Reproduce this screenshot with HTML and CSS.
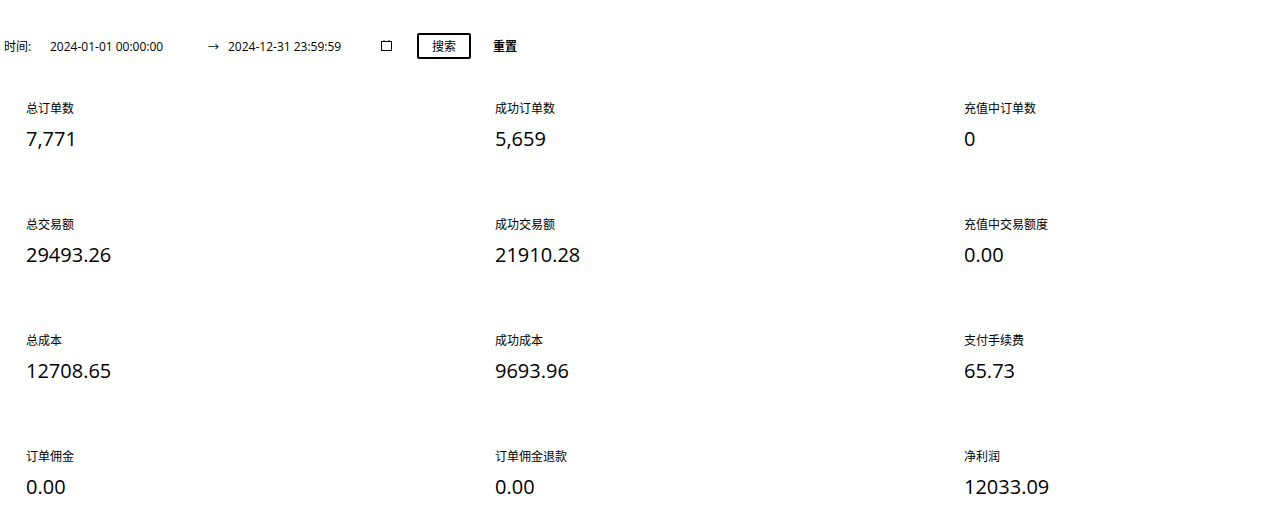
FILE: index.html
```html
<!DOCTYPE html>
<html lang="zh">
<head>
<meta charset="utf-8">
<title>统计</title>
<link rel="stylesheet" href="styles.css">
</head>
<body>
<div class="toolbar">
  <span class="label">时间:</span>
  <span class="date first">2024-01-01 00:00:00</span>
  <span class="arrow">→</span>
  <span class="date second">2024-12-31 23:59:59</span>
  <svg class="cal" width="11" height="11" viewBox="0 0 11 11"><rect x="0.5" y="1.5" width="10" height="9" fill="none" stroke="#000" stroke-width="1"/><line x1="3" y1="0" x2="3" y2="2" stroke="#000"/><line x1="8" y1="0" x2="8" y2="2" stroke="#000"/></svg>
  <button class="btn-search">搜索</button>
  <button class="btn-reset">重置</button>
</div>
<div class="stats">
  <div class="cell"><div class="name">总订单数</div><div class="value">7,771</div></div>
  <div class="cell"><div class="name">成功订单数</div><div class="value">5,659</div></div>
  <div class="cell"><div class="name">充值中订单数</div><div class="value">0</div></div>
  <div class="cell"><div class="name">总交易额</div><div class="value">29493.26</div></div>
  <div class="cell"><div class="name">成功交易额</div><div class="value">21910.28</div></div>
  <div class="cell"><div class="name">充值中交易额度</div><div class="value">0.00</div></div>
  <div class="cell"><div class="name">总成本</div><div class="value">12708.65</div></div>
  <div class="cell"><div class="name">成功成本</div><div class="value">9693.96</div></div>
  <div class="cell"><div class="name">支付手续费</div><div class="value">65.73</div></div>
  <div class="cell"><div class="name">订单佣金</div><div class="value">0.00</div></div>
  <div class="cell"><div class="name">订单佣金退款</div><div class="value">0.00</div></div>
  <div class="cell"><div class="name">净利润</div><div class="value">12033.09</div></div>
</div>
</body>
</html>
```
FILE: styles.css
```css
html, body {
  margin: 0;
  padding: 0;
  background: #fff;
  color: #000;
  font-family: "Open Sans", "Noto Sans CJK SC", sans-serif;
  overflow: hidden;
}
.toolbar {
  display: flex;
  align-items: center;
  height: 26px;
  padding: 33px 0 0 4px;
  font-size: 12px;
}
.label {
  width: 46px;
}
.date {
  display: inline-block;
}
.date.first {
  width: 158px;
}
.arrow {
  width: 20px;
  font-size: 11px;
}
.date.second {
  width: 153px;
}
.cal {
  margin-top: -1px;
}
.btn-search {
  margin-left: 25px;
  width: 54px;
  height: 26px;
  border: 2px solid #000;
  border-radius: 2px;
  background: #fff;
  font: inherit;
  color: #000;
  padding: 0;
}
.btn-reset {
  margin-left: 14px;
  border: none;
  background: none;
  font: inherit;
  font-weight: bold;
  color: #000;
  padding: 0 8px;
}
.stats {
  display: grid;
  grid-template-columns: 469px 469px 1fr;
  grid-template-rows: 116px 116px 116px auto;
  padding: 40px 0 0 26px;
}
.name {
  font-size: 12px;
  line-height: 20px;
}
.value {
  margin-top: 6px;
  font-size: 20px;
  line-height: 28px;
}
```
